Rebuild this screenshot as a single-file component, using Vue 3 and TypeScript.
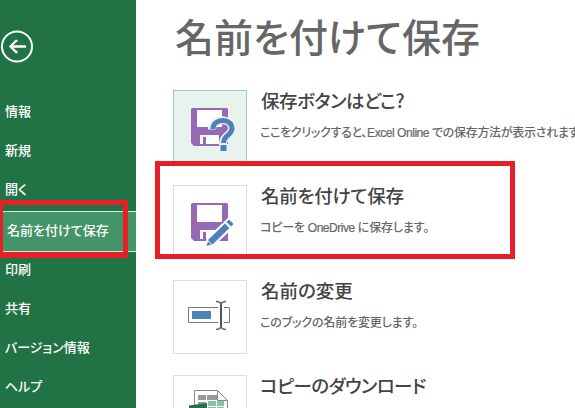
<script setup lang="ts">
interface NavItem {
  id: string
  label: string
  selected?: boolean
}

interface TextPart {
  text: string
  latin?: boolean
}

interface Action {
  id: string
  title: string
  description?: TextPart[]
}

const navItems: NavItem[] = [
  { id: 'info', label: '情報' },
  { id: 'new', label: '新規' },
  { id: 'open', label: '開く' },
  { id: 'save-as', label: '名前を付けて保存', selected: true },
  { id: 'print', label: '印刷' },
  { id: 'share', label: '共有' },
  { id: 'about', label: 'バージョン情報' },
  { id: 'help', label: 'ヘルプ' },
]

const actions: Action[] = [
  {
    id: 'where',
    title: '保存ボタンはどこ?',
    description: [
      { text: 'ここをクリックすると、' },
      { text: 'Excel Online ', latin: true },
      { text: 'での保存方法が表示されます' },
    ],
  },
  {
    id: 'save',
    title: '名前を付けて保存',
    description: [{ text: 'コピーを' }, { text: ' OneDrive ', latin: true }, { text: 'に保存します。' }],
  },
  { id: 'rename', title: '名前の変更', description: [{ text: 'このブックの名前を変更します。' }] },
  { id: 'download', title: 'コピーのダウンロード' },
]
</script>

<template>
  <div class="backstage">
    <nav class="sidebar">
      <button class="back" aria-label="戻る">
        <svg width="34" height="34" viewBox="0 0 34 34" fill="none" stroke="#fff">
          <circle cx="17" cy="16.500" r="15" stroke-width="2" />
          <path d="M26 16.500H11M17.500 10.800h-1.500L10.500 16.500l5.500 5.500h1.500" stroke-width="2.300" />
        </svg>
      </button>
      <ul class="nav">
        <li v-for="item in navItems" :key="item.id" :class="['nav-item', item.id, { selected: item.selected }]">
          <span>{{ item.label }}</span>
        </li>
      </ul>
      <div class="mark mark-nav"></div>
    </nav>

    <main class="content">
      <h1>名前を付けて保存</h1>
      <section v-for="action in actions" :key="action.id" :class="['action', action.id]">
        <div class="tile">
          <svg v-if="action.id === 'where' || action.id === 'save'" width="72" height="72" viewBox="0 0 72 72">
            <path d="M17 18.500a1.500 1.500 0 0 1 1.500-1.500h34a1.500 1.500 0 0 1 1.500 1.500V55H20l-3-3z" fill="#9669b7" />
            <path d="M23 19h25v17H23z" fill="#fff" />
            <path d="M26 44h19v9h-13v-7h-3v7h-3z" fill="#fff" />
            <g v-if="action.id === 'where'" fill="none">
              <path d="M38 38.500c0-12 20-12.500 20-1 0 7-9 7-9 15v1" stroke="#e9f3ed" stroke-width="8" />
              <path d="M45 53h9v8h-9z" fill="#e9f3ed" />
              <path d="M39 38c0-11 19-11.500 19-.5 0 6.500-8.500 7-8.500 14.500" stroke="#4c82b8" stroke-width="5" />
              <path d="M46.500 54h6v6h-6z" fill="#4c82b8" />
            </g>
            <g v-else>
              <path d="M30 62l3-10 22-21 8 7-22 21z" fill="#fff" />
              <path d="M32.500 60l2-6.500L51 37.500l4.500 4.500L39 58z" fill="#4c82b8" />
              <path d="M52.500 36l2.500-2.500 4.500 4.500-2.500 2.500z" fill="#4c82b8" />
              <path d="M33.800 54.500l3.700 3.700" stroke="#fff" stroke-width="1" />
            </g>
          </svg>
          <svg v-else-if="action.id === 'rename'" width="72" height="72" viewBox="0 0 72 72" fill="none">
            <path d="M14.500 26.500h41v15h-41z" stroke="#777" />
            <path d="M18 30h19v8H18z" fill="#4c82b8" />
            <path d="M44 24h6v22h-6z" fill="#fff" />
            <path d="M47 23v23" stroke="#555" stroke-width="2" />
            <path d="M42 20.500c3 0 4.300 1 5 2.500 .7-1.500 2-2.500 5-2.500M42 48.500c3 0 4.300-1 5-2.500 .7 1.500 2 2.500 5 2.500" stroke="#666" stroke-width="1.300" />
          </svg>
          <svg v-else width="72" height="72" viewBox="0 0 72 72" fill="none">
            <path d="M20.500 14.500h23l10 10V60h-33z" fill="#fff" stroke="#888" />
            <path d="M43.500 14.500v10h10" stroke="#888" />
            <path d="M24 19h8v5h-8zm9 0h10v5H33zM24 26h8v4h-8z" fill="#999" />
            <path d="M34 25h8v5h-8zm9 0h7v5h-7zm-9 6h8v5h-8zm9 0h7v5h-7z" fill="#86c3a2" />
            <path d="M15 29.500L33 27v30l-18-3z" fill="#217346" />
          </svg>
        </div>
        <div class="copy">
          <h2>{{ action.title }}</h2>
          <p v-if="action.description"><span v-for="(part, i) in action.description" :key="i" :class="{ latin: part.latin }">{{ part.text }}</span></p>
        </div>
      </section>
      <div class="mark mark-action"></div>
    </main>
  </div>
</template>

<style>
body {
  margin: 0;
  overflow: hidden;
}
</style>

<style scoped>
.backstage {
  position: relative;
  display: flex;
  width: 575px;
  height: 408px;
  overflow: hidden;
  background: #fff;
  font-family: "Noto Sans CJK JP", sans-serif;
  font-feature-settings: "palt";
}

.sidebar {
  box-sizing: border-box;
  width: 136px;
  height: 408px;
  flex: none;
  padding-top: 30px;
  background: #217346;
}

.back {
  display: block;
  width: 34px;
  height: 34px;
  padding: 0;
  border: 0;
  background: none;
}

.back svg {
  display: block;
}

.nav {
  margin: 0;
  padding: 27px 0 0;
  list-style: none;
}

.nav-item {
  box-sizing: border-box;
  display: flex;
  align-items: center;
  height: 39px;
  padding-left: 5px;
  color: #fff;
  font-size: 13px;
  font-weight: 500;
  white-space: nowrap;
}

.nav-item.selected {
  height: 41px;
  margin: 3px 0 -3px;
  padding: 0 0 5px 7px;
  border: solid #d5eadf;
  border-width: 1px 0;
  background: #439467;
}

.content {
  flex: 1;
  min-width: 0;
  padding-left: 37px;
}

h1,
h2,
p {
  margin: 0;
  white-space: nowrap;
}

h1 {
  height: 90px;
  padding-left: 2px;
  box-sizing: border-box;
  color: #666;
  font-size: 39px;
  font-weight: 500;
  line-height: 71px;
}

.action {
  display: flex;
  gap: 14px;
  height: 95px;
}

.tile {
  box-sizing: border-box;
  width: 74px;
  height: 74px;
  flex: none;
  border: 1px solid #ddd;
}

.tile svg {
  display: block;
}

.where .tile {
  border-color: #9dceb3;
  background: #e9f3ed;
}

h2 {
  color: #444;
  font-size: 18.500px;
  font-weight: 500;
  line-height: 20px;
}

.where h2 {
  letter-spacing: -0.5px;
}

.save h2 {
  letter-spacing: -0.25px;
}

.download h2 {
  margin-left: -1px;
  letter-spacing: -0.6px;
}

p {
  margin: 12px 0 0 -1px;
  color: #666;
  font-size: 12px;
  font-weight: 500;
  letter-spacing: -0.15px;
  line-height: 20px;
  white-space: pre;
}

.where p {
  letter-spacing: -0.3px;
}

p .latin {
  font-family: "Liberation Sans", Arial, sans-serif;
  letter-spacing: -0.45px;
  -webkit-text-stroke: 0.2px #666;
}

.mark {
  position: absolute;
  box-sizing: border-box;
  border: 5px solid #e81f27;
}

.mark-nav {
  top: 200px;
  left: -2px;
  width: 130px;
  height: 58px;
  border-bottom-width: 6px;
}

.mark-action {
  top: 161px;
  left: 155px;
  width: 360px;
  height: 98px;
}
</style>
